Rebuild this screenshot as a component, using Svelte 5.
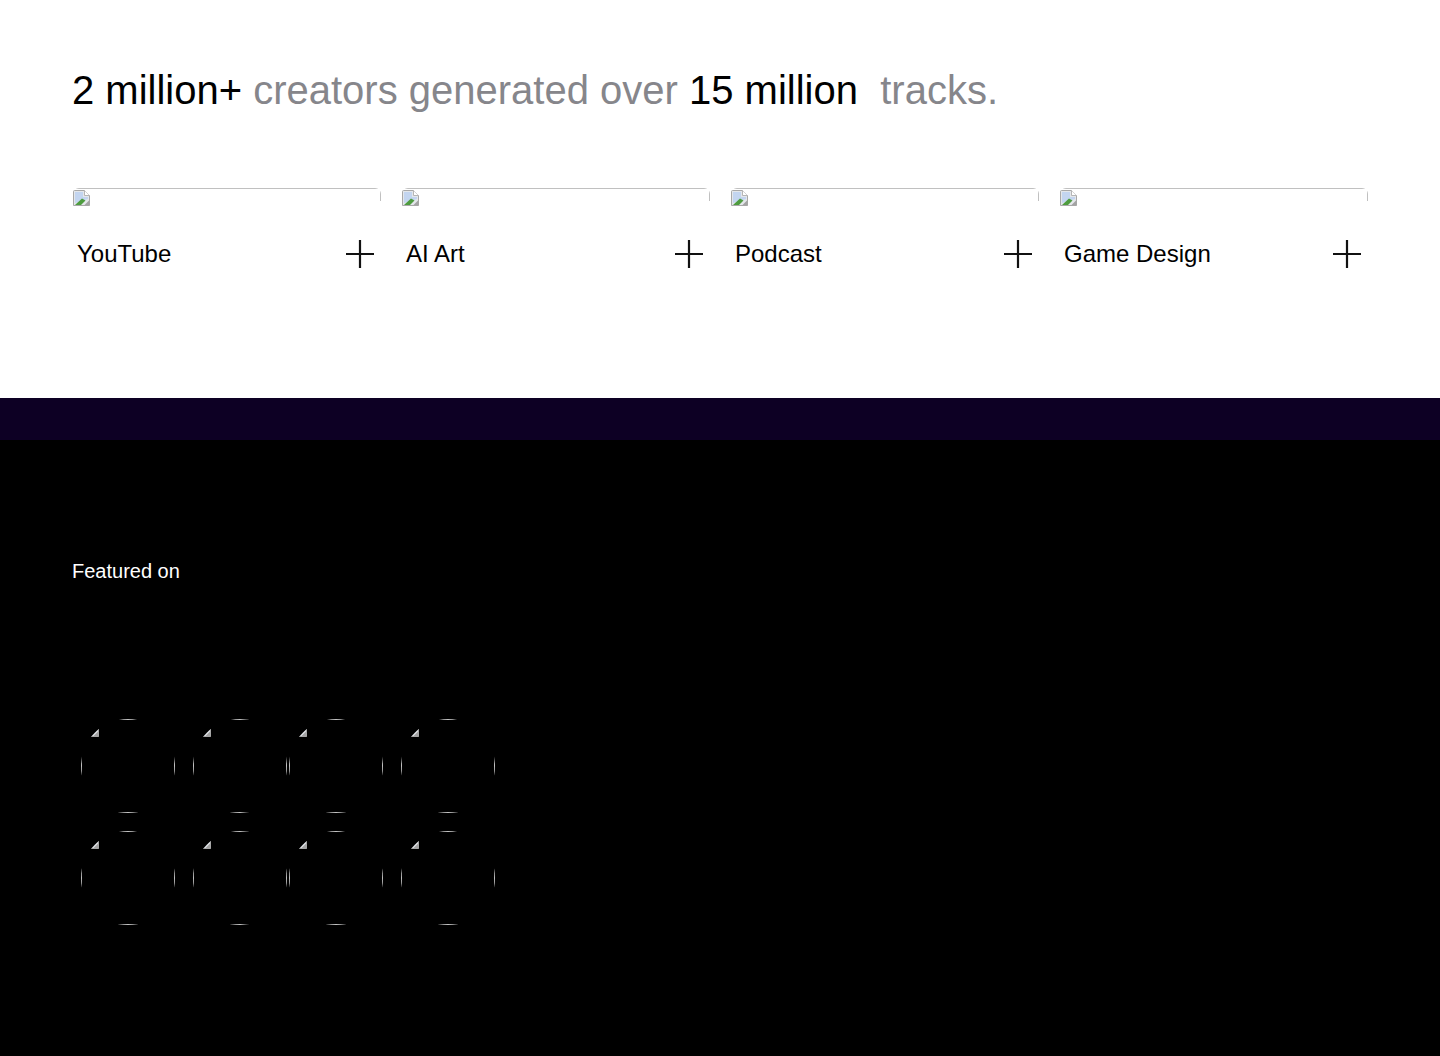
<script>
  const cards = ['YouTube', 'AI Art', 'Podcast', 'Game Design'];
  const rows = [0, 1];
  const pairs = [0, 1];
  const logos = [0, 1];
</script>

{#snippet brokenIcon()}
  <svg class="broken" width="17" height="16" viewBox="0 0 17 16" aria-hidden="true">
    <path d="M.5 1.5q0-1 1-1h10l5 5v10h-16z" fill="#e4e7eb" stroke="#a8a8a8" />
    <path d="M11.5 .5v5h5" fill="#fff" stroke="#b5b5b5" />
    <path d="M2 2h8v5h5v2L2 13z" fill="#c3d5f0" />
    <path d="M2 15 9 8.5l3.5 2L8 15z" fill="#4e9c3f" />
    <path d="M11 15.5 16.5 10v5.5z" fill="#a3a3a3" />
  </svg>
{/snippet}

<main>
  <section class="intro">
    <h2><span class="strong">2 million+</span> creators generated over <span class="strong">15 million</span>&nbsp; tracks.</h2>

    <div class="cards">
      {#each cards as card}
        <div class="card">
          <div class="thumb">
            <div class="thumb-clip">
              <div class="thumb-frame"></div>
            </div>
            {@render brokenIcon()}
          </div>
          <div class="card-row">
            <span class="label">{card}</span>
            <svg class="plus" width="28" height="28" viewBox="0 0 28 28" aria-hidden="true">
              <path d="M0 14h28M14 0v28" stroke="#111" stroke-width="2.2" fill="none" />
            </svg>
          </div>
        </div>
      {/each}
    </div>
  </section>

  <div class="band"></div>

  <section class="featured">
    <p class="featured-title">Featured on</p>
    <div class="logos">
      {#each rows as row}
        <div class="logo-row">
          {#each pairs as pair}
            <div class="logo-pair">
              {#each logos as logo}
                <div class="logo">
                  <div class="logo-frame"></div>
                  {@render brokenIcon()}
                </div>
              {/each}
            </div>
          {/each}
        </div>
      {/each}
    </div>
  </section>
</main>

<style>
  :global(body) {
    margin: 0;
    background: #000;
  }

  main {
    font-family: "Liberation Sans", Arial, sans-serif;
    height: 1056px;
    overflow: hidden;
  }

  .intro {
    background: #fff;
    height: 398px;
    padding: 66px 72px 0;
    box-sizing: border-box;
  }

  h2 {
    margin: 0 0 74px;
    font-size: 40px;
    line-height: 48px;
    font-weight: 400;
    color: #86868b;
  }

  .strong {
    color: #000;
  }

  .cards {
    display: grid;
    grid-template-columns: repeat(4, 309px);
    gap: 20px;
  }

  .thumb {
    position: relative;
    height: 18px;
    padding: 2px 0 0 1px;
    box-sizing: border-box;
  }

  /* rounded clip over a square frame, so the corners drop out */
  .thumb-clip {
    position: absolute;
    top: 0;
    left: 1px;
    right: 0;
    height: 18px;
    overflow: hidden;
    border-radius: 6px;
    clip-path: inset(0 0 5px 0);
  }

  .thumb-frame {
    height: 40px;
    border: 1px solid #c0c0c0;
  }

  .broken {
    display: block;
    position: relative;
  }

  .card-row {
    display: flex;
    align-items: center;
    justify-content: space-between;
    padding: 0 7px 0 5px;
    margin-top: 34px;
    height: 28px;
  }

  .label {
    font-size: 24px;
    line-height: 28px;
    color: #000;
  }

  .band {
    height: 42px;
    background: #0d0024;
  }

  .featured {
    background: #000;
    padding: 119px 72px 0;
    color: #fff;
  }

  .featured-title {
    margin: 0;
    font-size: 20px;
    line-height: 24px;
  }

  .logos {
    display: flex;
    flex-direction: column;
    gap: 18px;
    margin-top: 136px;
    padding-left: 9px;
  }

  .logo-row {
    display: flex;
    gap: 2px;
  }

  .logo-pair {
    display: flex;
    gap: 18px;
  }

  .logo {
    position: relative;
    width: 94px;
    height: 94px;
    padding: 2px 1px;
    box-sizing: border-box;
    border-radius: 50%;
    overflow: hidden;
  }

  .logo-frame {
    position: absolute;
    inset: 0;
    border: 1px solid #c0c0c0;
  }
</style>
